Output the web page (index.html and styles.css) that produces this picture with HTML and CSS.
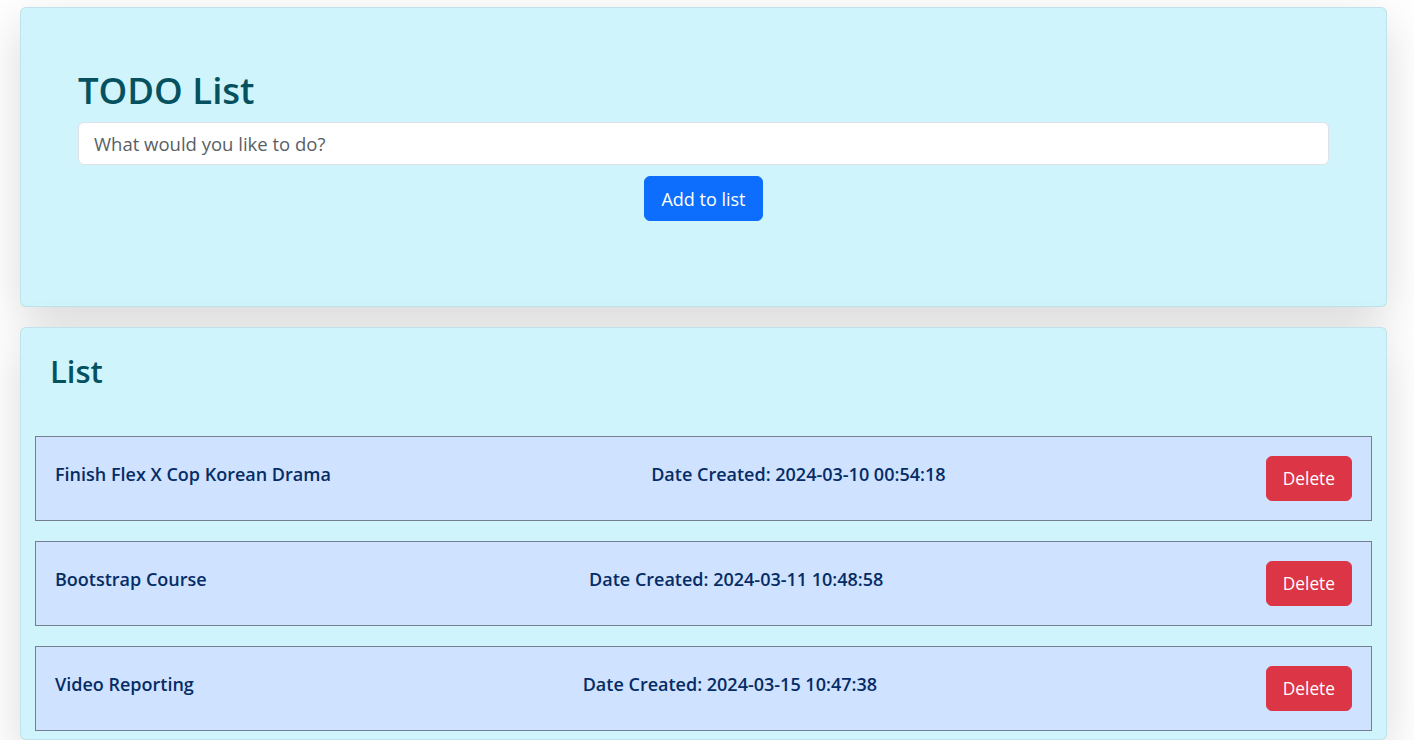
FILE: index.html
```html
<!DOCTYPE html>
<html lang="en">
<head>
<meta charset="utf-8">
<title>TODO List</title>
<link rel="stylesheet" href="styles.css">
</head>
<body>
<div class="page">
  <section class="card card-form">
    <h1 class="title">TODO List</h1>
    <input class="todo-input" type="text" placeholder="What would you like to do?">
    <div class="actions">
      <button class="btn btn-primary">Add to list</button>
    </div>
  </section>
  <section class="card card-list">
    <h2 class="list-title">List</h2>
    <ul class="items">
      <li class="item">
        <h5 class="item-text">Finish Flex X Cop Korean Drama</h5>
        <h5 class="item-text">Date Created: 2024-03-10 00:54:18</h5>
        <button class="btn btn-danger">Delete</button>
      </li>
      <li class="item">
        <h5 class="item-text">Bootstrap Course</h5>
        <h5 class="item-text">Date Created: 2024-03-11 10:48:58</h5>
        <button class="btn btn-danger">Delete</button>
      </li>
      <li class="item">
        <h5 class="item-text">Video Reporting</h5>
        <h5 class="item-text">Date Created: 2024-03-15 10:47:38</h5>
        <button class="btn btn-danger">Delete</button>
      </li>
    </ul>
  </section>
</div>
</body>
</html>
```

FILE: styles.css
```css
* { box-sizing: border-box; }
html, body { margin: 0; padding: 0; background: #fff; }
body {
  font-family: "Open Sans", "Noto Sans", sans-serif;
  color: #212529;
  overflow: hidden;
}
.page {
  padding: 7px 27px 0 20px;
  display: flex;
  flex-direction: column;
  gap: 20px;
}
.card {
  background: #cff4fc;
  border: 1px solid rgba(0, 0, 0, 0.07);
  border-radius: 6px;
  box-shadow: 0 16px 48px rgba(0, 0, 0, 0.15);
}
.card-form {
  height: 300px;
  padding: 58px 57px 0 57px;
  display: flex;
  flex-direction: column;
}
.title {
  margin: 0 0 8px 0;
  font-size: 36.5px;
  font-weight: 600;
  line-height: 48px;
  color: #055160;
}
.todo-input {
  height: 43px;
  width: 100%;
  padding: 0 15px;
  border: 1px solid #dee2e6;
  border-radius: 6px;
  background: #fff;
  font-family: inherit;
  font-size: 18.5px;
  color: #212529;
  outline: none;
}
.todo-input::placeholder { color: #595f66; }
.actions {
  display: flex;
  justify-content: center;
  margin-top: 11px;
}
.btn {
  height: 45px;
  padding: 0 16px;
  border: 1px solid transparent;
  border-radius: 6px;
  font-family: inherit;
  font-size: 18px;
  line-height: 1;
  color: #fff;
  cursor: pointer;
}
.btn-primary { background: #0d6efd; border-color: #0d6efd; }
.btn-danger { background: #dc3545; border-color: #dc3545; font-size: 17.3px; }
.card-list {
  padding: 0 14px 9px 14px;
  height: 413px;
}
.list-title {
  margin: 0;
  padding: 22px 0 0 15px;
  height: 108px;
  font-size: 31px;
  font-weight: 600;
  line-height: 42px;
  color: #055160;
}
.items {
  list-style: none;
  margin: 0;
  padding: 0;
  display: flex;
  flex-direction: column;
  gap: 20px;
}
.item {
  height: 85px;
  padding: 0 19px 0 19px;
  border: 1px solid #74808f;
  background: #cfe2ff;
  display: flex;
  align-items: center;
  justify-content: space-between;
}
.item-text {
  margin: 0 0 10px 0;
  font-size: 18px;
  font-weight: 600;
  line-height: 24px;
  color: #052c65;
}
```
